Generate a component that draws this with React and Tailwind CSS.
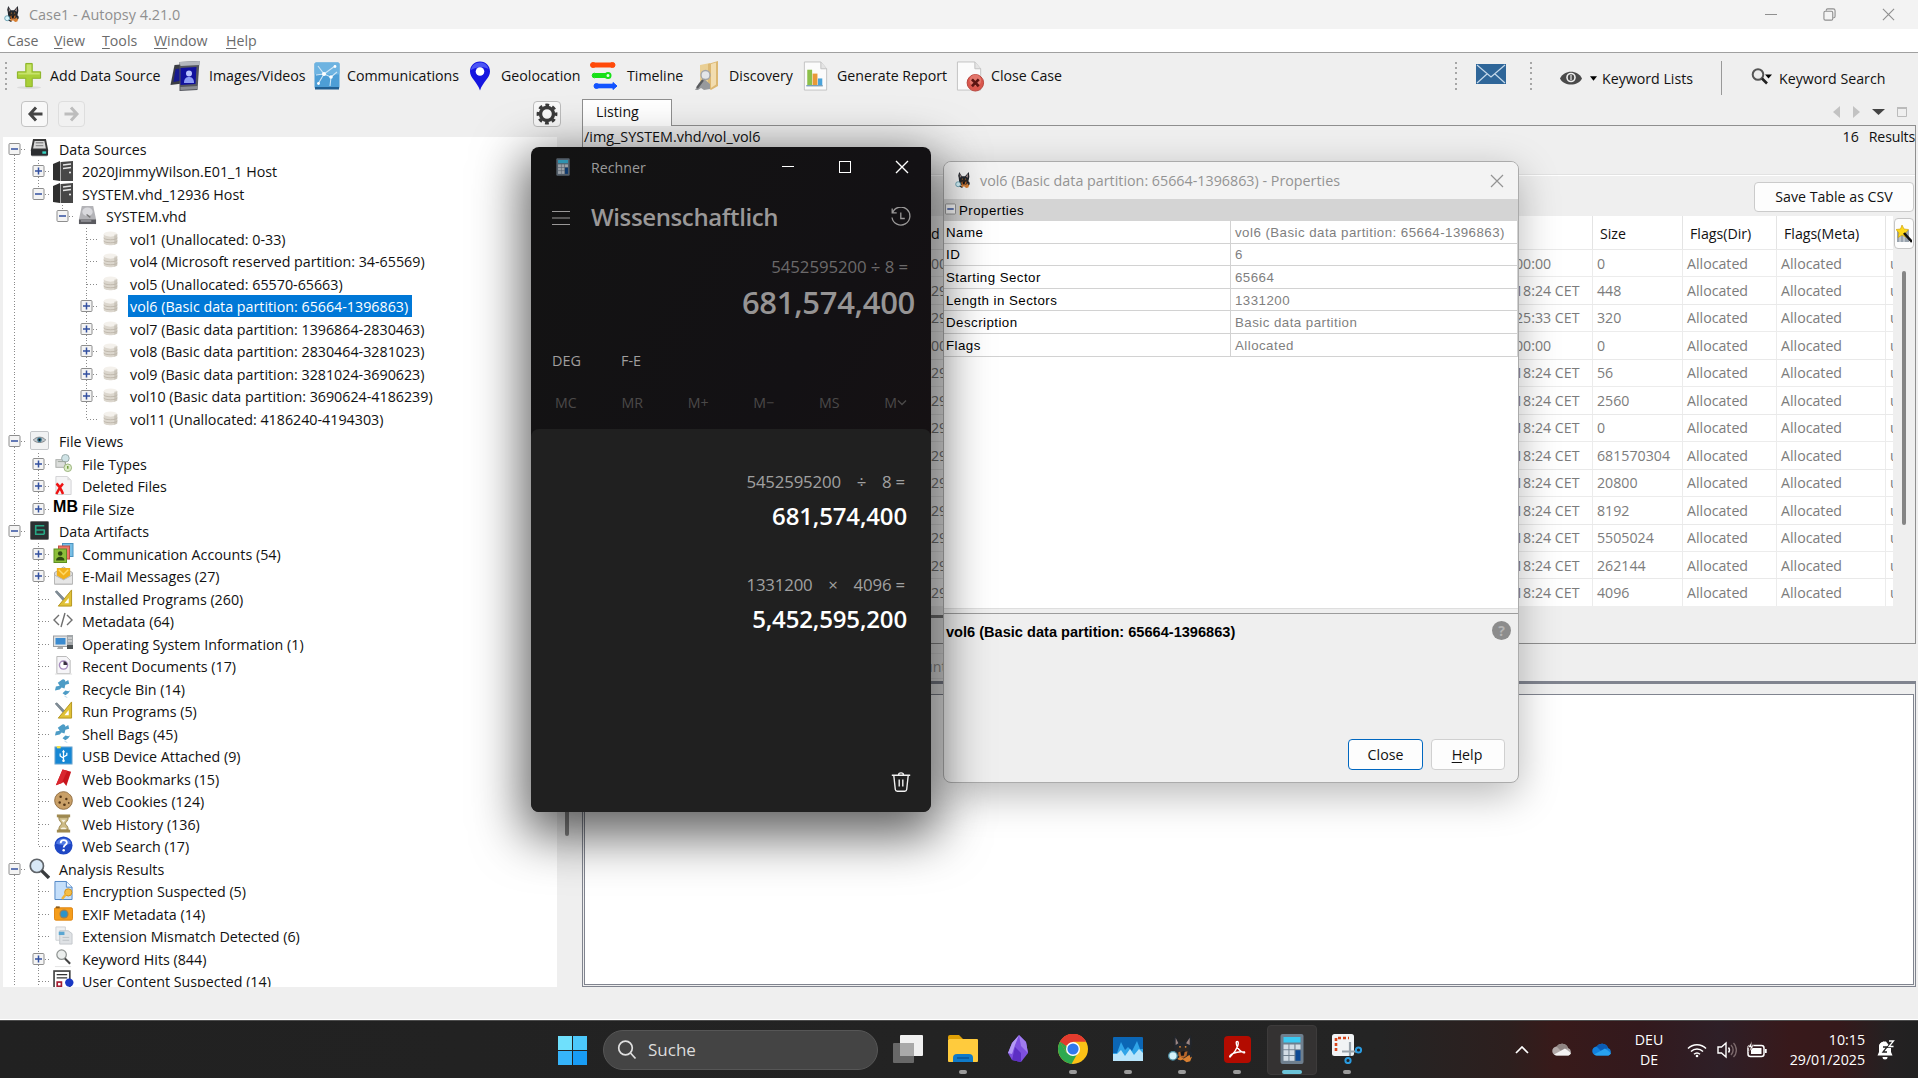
import React from "react";

/* ---------- shared icons ---------- */

function Dog({ className }) {
  return (
    <svg viewBox="0 0 32 32" className={className}>
      <path d="M8 0l5 8h6l7-8 1 9-1 5-2 8-4 3h-8l-4-5-1-9-1-4z" fill="#22262c" />
      <path d="M9 3l3 6-3 2zM24.500 3l-4 6 4 2z" fill="#9c8684" />
      <path d="M10 14l5-1h4l5 1-1 6-2 5h-8l-2-5z" fill="#2c2724" />
      <path d="M12 19l3-1 3 1 4-1-1 5-3 2h-4l-2-2z" fill="#b5652a" />
      <path d="M14 18h5l-1 5h-3z" fill="#14161a" />
      <path d="M11 26l3-2 4 2 6-4 3 2-2 5-4 1-4-3-5 2z" fill="#d98032" />
      <path d="M24 17l3 2 1 4-3 2z" fill="#22262c" />
      <circle cx="6" cy="23" r="4.700" fill="#d6f3fa" stroke="#4e8fa3" strokeWidth="1.400" />
      <path d="M9 27l5 2" stroke="#21262d" strokeWidth="2" />
      <circle cx="13.800" cy="13" r="1" fill="#e08a3a" />
      <circle cx="20" cy="13" r="1" fill="#e08a3a" />
    </svg>
  );
}

function Cross({ className, w = 1.2 }) {
  return (
    <svg viewBox="0 0 14 14" className={className} fill="none" stroke="currentColor" strokeWidth={w}>
      <path d="M1 1l12 12M13 1L1 13" />
    </svg>
  );
}

function CalcIcon({ className }) {
  return (
    <svg viewBox="0 0 24 30" className={className}>
      <rect x="0.500" y="0" width="23" height="30" rx="2" fill="#6f7f8e" />
      <rect x="3.500" y="3" width="17" height="5.500" fill="#3bc9f2" />
      {[10.500, 16.200, 22].map((y) =>
        [3.500, 9.400].map((x) => <rect key={x + "-" + y} x={x} y={y} width="5" height="4.800" fill="#d3dde6" />)
      )}
      <rect x="15.500" y="10.500" width="5" height="4.800" fill="#d3dde6" />
      <rect x="15.500" y="16.200" width="5" height="10.600" fill="#0d4a94" />
    </svg>
  );
}

/* ---------- main toolbar ---------- */

const toolIcons = {
  add: (
    <svg viewBox="0 0 28 30" className="h-[30px] w-[26px]">
      <ellipse cx="14" cy="27.500" rx="13" ry="1.500" fill="#dcdcdc" />
      <path d="M10.500 1.500h7v9h9v7h-9v9h-7v-9h-9v-7h9z" fill="#a9cf38" stroke="#86b01f" />
      <path d="M11.500 2.500h5v9h9v2h-23v-2h9z" fill="#c7e36b" />
    </svg>
  ),
  images: (
    <svg viewBox="0 0 30 30" className="h-[30px] w-[31px]">
      <path d="M4 4l12-1v19L0 24z" fill="#3b3d44" />
      <path d="M5 8l9-1v12l-11 2z" fill="#171a8f" />
      <path d="M9 1l20-1-2 29-18 1z" fill="#54565e" />
      <path d="M9 1l20-1v4l-19 1z" fill="#b4b7be" />
      <path d="M10 7l16-1-1 17-15 1z" fill="#11119e" />
      <circle cx="18.500" cy="12.500" r="3" fill="#b9c3ff" />
      <path d="M13.500 22c0-5 2.500-6 5-6s5 1 5 6z" fill="#8c9bf5" />
      <path d="M10 26l17-1v3l-17 1z" fill="#8b8d94" />
    </svg>
  ),
  comm: (
    <svg viewBox="0 0 26 28" className="h-[28px] w-[26px]">
      <rect x="0.500" y="0.500" width="25" height="26" rx="1.500" fill="#4d9ed6" />
      <rect x="0.500" y="0.500" width="25" height="12" rx="1.500" fill="#6db3e1" />
      <rect x="1" y="25" width="24" height="2.500" fill="#215f92" />
      <path d="M4 4l6 8 11-8M10 12l-6 10M10 12l7 3-1 9M17 15l6-5M10 12L2 13" stroke="#cfe6f6" strokeWidth="1.100" fill="none" />
      <g fill="#fff">
        <circle cx="10" cy="12" r="2" />
        <circle cx="17" cy="15" r="1.800" />
        <circle cx="4.500" cy="21.500" r="1.400" />
        <circle cx="21" cy="4.500" r="1.400" />
      </g>
    </svg>
  ),
  geo: (
    <svg viewBox="0 0 22 30" className="h-[30px] w-[22px]">
      <path d="M11 0.500C5 0.500 1 5 1 10.500c0 6.500 7 10 10 19 3-9 10-12.500 10-19C21 5 17 0.500 11 0.500z" fill="#1616e0" />
      <path d="M11 1.500C6 1.500 2.500 5 2 9c4-3 13-4 17.500-1C18.500 4 15.500 1.500 11 1.500z" fill="#4b55f5" />
      <circle cx="11" cy="10.500" r="4.300" fill="#fff" />
    </svg>
  ),
  timeline: (
    <svg viewBox="0 0 28 30" className="h-[30px] w-[28px]">
      <g stroke="#ff4a0a" fill="#ff4a0a">
        <path d="M4 4h18" strokeWidth="5" />
        <circle cx="3" cy="4" r="2.500" />
        <circle cx="22.500" cy="4" r="2.500" />
      </g>
      <g stroke="#17e017" fill="#17e017">
        <path d="M5 14.500h12" strokeWidth="5" />
        <circle cx="4.500" cy="14.500" r="2.300" />
        <circle cx="18" cy="14.500" r="2.500" fill="#e8ffe8" strokeWidth="2" />
      </g>
      <g stroke="#1253ff" fill="#1253ff">
        <path d="M8 25h16" strokeWidth="4.600" />
        <circle cx="6.500" cy="25" r="2.500" />
        <path d="M23 21.500l4 3.500-4 3.500z" />
      </g>
    </svg>
  ),
  discovery: (
    <svg viewBox="0 0 26 30" className="h-[30px] w-[26px]">
      <path d="M6 4l10-2v24l-10 1z" fill="#e9cf95" />
      <path d="M14 3l10-3v25l-7 4-3-2z" fill="#dcb873" />
      <path d="M17 3l5-1.500v22L17 27z" fill="#f2ddb0" />
      <circle cx="11.500" cy="14" r="4.500" fill="#e4e6e8" stroke="#a3a5a8" strokeWidth="1.300" />
      <path d="M5 22l5-4 6 5v5l-6 1-3-2-3 2H1z" fill="#97999c" />
      <path d="M9 19L3 27" stroke="#595b5e" strokeWidth="2.200" />
    </svg>
  ),
  report: (
    <svg viewBox="0 0 27 32" className="h-[31px] w-[27px]">
      <path d="M2 1h17l6 7v22H2z" fill="#fbfbfb" stroke="#c2c2c2" />
      <path d="M19 1v7h6" fill="#e4e4e4" stroke="#c2c2c2" />
      <rect x="5" y="9" width="5" height="16" fill="#8cc04a" />
      <rect x="10.500" y="13" width="5" height="12" fill="#e89a38" />
      <rect x="16" y="18" width="4.500" height="7" fill="#4aa3da" />
      <path d="M4 25.500h17" stroke="#7b9fb8" strokeWidth="1.500" />
    </svg>
  ),
  close: (
    <svg viewBox="0 0 29 32" className="h-[31px] w-[29px]">
      <path d="M1 1h18l6 7v22H1z" fill="#fbfbfb" stroke="#c2c2c2" />
      <path d="M19 1v7h6" fill="#e4e4e4" stroke="#c2c2c2" />
      <circle cx="19.500" cy="22.500" r="8.500" fill="#d9574d" stroke="#b7443c" />
      <circle cx="19.500" cy="20" r="6" fill="#e3776d" />
      <path d="M16 19l7 7M23 19l-7 7" stroke="#5c1512" strokeWidth="2.800" />
    </svg>
  ),
};

const tools = [
  ["add", "Add Data Source", "w-[32px]", "w-[122px]"],
  ["images", "Images/Videos", "w-[37px]", "w-[107px]"],
  ["comm", "Communications", "w-[31px]", "w-[124px]"],
  ["geo", "Geolocation", "w-[30px]", "w-[91px]"],
  ["timeline", "Timeline", "w-[35px]", "w-[69px]"],
  ["discovery", "Discovery", "w-[33px]", "w-[75px]"],
  ["report", "Generate Report", "w-[33px]", "w-[121px]"],
  ["close", "Close Case", "w-[33px]", "w-[90px]"],
];

function Grip() {
  return (
    <div className="flex h-7 w-[2px] flex-col justify-between">
      {[0, 1, 2, 3, 4, 5].map((i) => (
        <i key={i} className="h-[2px] w-[2px] bg-[#a6a6a6]" />
      ))}
    </div>
  );
}

function TitleBar() {
  return (
    <div className="flex h-[29px] shrink-0 items-center bg-[#f3f3f3] pl-1 text-[#8f8f8f]">
      <Dog className="h-[17px] w-[17px]" />
      <span className="ml-2 text-[14.4px]">Case1 - Autopsy 4.21.0</span>
      <div className="ml-auto flex items-center pr-[23px]">
        <span className="h-px w-3 bg-[#8f8f8f]" />
        <svg viewBox="0 0 14 14" className="ml-[46px] h-[13px] w-[13px]" fill="none" stroke="#8f8f8f" strokeWidth="1.200">
          <rect x="1" y="3.500" width="9.500" height="9.500" rx="1.500" />
          <path d="M3.500 3V2.500A1.500 1.500 0 015 1h6a2 2 0 012 2v6a1.500 1.500 0 01-1.500 1.500H11" />
        </svg>
        <Cross className="ml-[46px] h-[13px] w-[13px]" />
      </div>
    </div>
  );
}

function MenuBar() {
  const items = [
    ["", "Case", "w-[47px]"],
    ["V", "iew", "w-[48px]"],
    ["T", "ools", "w-[52px]"],
    ["W", "indow", "w-[72px]"],
    ["H", "elp", "w-[50px]"],
  ];
  return (
    <div className="flex h-6 shrink-0 items-center border-b border-[#a0a0a0] bg-white pl-[7px] text-[14.2px] text-[#6b6b6b]">
      {items.map(([u, rest, w]) => (
        <span key={rest} className={w}>
          <span className="underline underline-offset-2">{u}</span>
          {rest}
        </span>
      ))}
    </div>
  );
}

function Toolbar() {
  return (
    <div className="flex h-[46px] shrink-0 items-center pl-[5px] text-[14.2px] text-[#111]">
      <Grip />
      <div className="ml-[9px] flex items-center">
        {tools.map(([id, label, iw, tw]) => (
          <div key={id} className="flex items-center whitespace-nowrap">
            <span className={"flex " + iw}>{toolIcons[id]}</span>
            <span className={"pb-px pl-0.5 " + tw}>{label}</span>
          </div>
        ))}
      </div>
      <div className="ml-auto flex items-center">
        <Grip />
        <svg viewBox="0 0 30 20" className="mb-1 ml-[19px] h-5 w-[30px]">
          <rect width="30" height="20" fill="#2f6699" />
          <path d="M1 1l14 12L29 1M1 19l10-9M29 19l-10-9" stroke="#c4d8ea" strokeWidth="1.200" fill="none" />
        </svg>
        <div className="ml-[24px]">
          <Grip />
        </div>
        <svg viewBox="0 0 22 14" className="ml-[28px] mt-1 h-[14px] w-[22px]">
          <path d="M0 7.500C4-1.500 18-1.500 22 7.500 18 15.500 4 15.500 0 7.500z" fill="#4a4a4a" />
          <circle cx="11" cy="6.500" r="4.800" fill="#efefef" />
          <circle cx="11" cy="6.500" r="3.200" fill="#4a4a4a" />
          <path d="M11 4v5" stroke="#ddd" strokeWidth="1.300" />
        </svg>
        <svg viewBox="0 0 6 4" className="ml-2 mt-1 h-[5px] w-[7px]">
          <path d="M0 0h6L3 4z" />
        </svg>
        <span className="ml-[5px] mt-[5px] w-[119px]">Keyword Lists</span>
        <span className="mt-1 h-[34px] w-px bg-[#999]" />
        <svg viewBox="0 0 22 17" className="ml-[29px] mt-px h-[17px] w-[22px]">
          <circle cx="7" cy="6.500" r="5.300" fill="#ececec" stroke="#555" strokeWidth="2" />
          <path d="M11 10.500l5 5" stroke="#222" strokeWidth="2.600" />
          <path d="M14 6.500h7l-3.500 4z" />
        </svg>
        <span className="ml-[6px] mt-[5px] w-[139px]">Keyword Search</span>
      </div>
    </div>
  );
}

/* ---------- tree ---------- */

const Wrap = ({ children, className = "h-[19px] w-[19px]" }) => (
  <svg viewBox="0 0 20 20" className={className}>
    {children}
  </svg>
);

const treeIcons = {
  drive: (
    <Wrap>
      <path d="M4 1h12l2 10H2z" fill="#d8d8d8" stroke="#3a3a3a" strokeWidth="2" />
      <path d="M6 4h8M6 7h8" stroke="#8f8f8f" strokeWidth="1.500" />
      <rect x="1" y="11" width="18" height="6.500" rx="1" fill="#2b2d30" />
      <rect x="13" y="13" width="4" height="2.500" fill="#35d6c5" />
      <rect x="2" y="18" width="16" height="1" fill="#ddd" />
    </Wrap>
  ),
  host: (
    <Wrap className="h-[20px] w-[20px]">
      <path d="M0 3l7-3v20l-7-1z" fill="#2f2f2f" />
      <path d="M8 1l12-1v20H8z" fill="#474747" />
      <path d="M7.500 1v19" stroke="#8b8b8b" strokeWidth=".7" />
      <path d="M10 4l8-1M10 7.500l8-1" stroke="#e6e6e6" strokeWidth="1.500" />
      <circle cx="17" cy="11.500" r="1" fill="#f5f5f5" />
    </Wrap>
  ),
  disk: (
    <Wrap>
      <path d="M4 0h12l3 14H1z" fill="#b3b3b7" />
      <ellipse cx="10" cy="6" rx="5.500" ry="4.500" fill="#d9d9dd" />
      <path d="M9 9l4 3" stroke="#777" strokeWidth="1.500" />
      <rect x="1" y="14" width="18" height="5" fill="#5a5a5f" />
      <rect x="3" y="15" width="11" height="1.500" fill="#9c9ca2" />
    </Wrap>
  ),
  vol: (
    <Wrap className="mr-px h-[15px] w-[15px]">
      <path d="M1 4v12c0 4 18 4 18 0V4z" fill="#dcd7ce" />
      <ellipse cx="10" cy="4" rx="9" ry="3.500" fill="#f4f1ec" />
      <path d="M1 9c0 3.500 18 3.500 18 0M1 13c0 3.500 18 3.500 18 0" stroke="#bdb6aa" strokeWidth="1.200" fill="none" />
      <path d="M15 5v13l4-1.500V4z" fill="#bab3a7" opacity=".5" />
    </Wrap>
  ),
  views: (
    <Wrap>
      <rect x="0.500" y="0.500" width="19" height="19" rx="1.500" fill="#f1f2f3" stroke="#bfc2c5" />
      <path d="M3.500 9.500c3-4 10-4 13 0-3 3.500-10 3.500-13 0z" fill="#c3c9cd" stroke="#7e8488" />
      <circle cx="10" cy="9.300" r="2.500" fill="#33738f" />
      <circle cx="10" cy="9.300" r="1.100" fill="#111" />
    </Wrap>
  ),
  types: (
    <Wrap>
      <rect x="2" y="6" width="10" height="8" fill="#dcdedc" stroke="#a6aaa6" />
      <circle cx="12" cy="4.500" r="4" fill="#cfe3e6" stroke="#97a8a8" />
      <path d="M4 8h8v6" stroke="#9aa39a" fill="none" />
      <circle cx="14.500" cy="14.500" r="4" fill="#dcebc8" stroke="#9ab37c" />
      <path d="M14.500 12.500v3" stroke="#6b9b35" strokeWidth="1.500" />
    </Wrap>
  ),
  deleted: (
    <Wrap>
      <path d="M2 0.500h12l4 4v15H2z" fill="#f4f4f5" stroke="#d2d2d4" />
      <path d="M14 0.500v4h4" fill="#ddd" />
      <path d="M2.500 8c3 2 5 6 7 11M9.500 8c-3 3-5 7-7 11" stroke="#ee1414" strokeWidth="2.600" fill="none" />
    </Wrap>
  ),
  size: <span className="mb-[2px] mr-[-5px] font-['Liberation_Sans'] text-[16px] font-bold leading-none">MB</span>,
  artifacts: (
    <Wrap>
      <rect x="0.500" y="0.500" width="19" height="19" rx="1" fill="#2b2f31" stroke="#6c6c6c" />
      <path d="M15 5H6v9h9M6 9.500h9M15 9v5" stroke="#27a583" strokeWidth="1.700" fill="none" />
    </Wrap>
  ),
  accounts: (
    <Wrap className="h-[20px] w-[21px]">
      <rect x="9" y="0.500" width="10.500" height="13" fill="#78bfe6" stroke="#4a93c0" />
      <rect x="5" y="3" width="11" height="13" fill="#ee7668" stroke="#c04f45" />
      <rect x="0.500" y="6" width="12.500" height="13.500" fill="#8cbf3a" stroke="#5f8f22" />
      <circle cx="6.700" cy="10.500" r="2.300" fill="#2e4a12" />
      <path d="M2.500 17.500c0-5 8.500-5 8.500 0z" fill="#2e4a12" />
    </Wrap>
  ),
  mail: (
    <Wrap>
      <path d="M0.500 7L10 1l9.500 6v12H0.500z" fill="#d9dadb" stroke="#aaa" />
      <path d="M3 2h14v8l-7 5-7-5z" fill="#f0b01c" />
      <path d="M5 4l5 5 5-5" stroke="#ffd968" strokeWidth="1.500" fill="none" />
      <path d="M0.500 9.500l9.500 5 9.500-5v9.500H0.500z" fill="#e6e6e6" stroke="#b5b5b5" />
    </Wrap>
  ),
  programs: (
    <Wrap>
      <path d="M1 3l2-1.500L16 15l-2 2z" fill="#7f8b94" />
      <path d="M18.500 1v17H4.500z" fill="#e0c136" stroke="#b3931b" />
      <path d="M1 3l2-1.500L11 10l-2 2z" fill="#7f8b94" />
      <path d="M15.500 9.500v5.500H11z" fill="#fff" />
    </Wrap>
  ),
  meta: (
    <Wrap className="h-[20px] w-[20px]">
      <path d="M6 4L1 9l5 5M14 4l5 5-5 5M12 2L8 16" stroke="#6f6f6f" strokeWidth="1.400" fill="none" />
    </Wrap>
  ),
  os: (
    <Wrap className="h-[20px] w-[20px]">
      <rect x="0.500" y="3" width="14" height="10.500" fill="#e1e3e5" stroke="#9b9ea1" />
      <rect x="2.500" y="5" width="10" height="6.500" fill="#3b8bd0" />
      <path d="M5 14h5v2H4z" fill="#aaa" />
      <rect x="14" y="2" width="6" height="14" fill="#a3a7aa" />
      <path d="M15 5h4M15 8h4" stroke="#eee" />
      <rect x="14" y="12" width="6" height="4" fill="#4c5154" />
    </Wrap>
  ),
  recent: (
    <Wrap>
      <path d="M3 0.500h10l4 4v14H3z" fill="#f6f5f8" stroke="#b5b5b5" />
      <circle cx="10" cy="9.500" r="4.300" fill="#fff" stroke="#a88cc0" strokeWidth="1.500" />
      <path d="M10 9.500V5.500a4 4 0 014 4z" fill="#3a3340" />
      <path d="M1 19h18" stroke="#ddd" />
    </Wrap>
  ),
  recycle: (
    <Wrap>
      <path d="M8 1c2-1.500 4 0 4 2l3-2 1 4-4 1-1 4-3-1-2 2-5 1 1-4 4-1-2-3z" fill="#4d9cc6" />
      <path d="M12 12l3 1 2-1-2 3-3 2-3-2z" fill="#4d9cc6" />
      <path d="M11 18l3 1.500" stroke="#bcd9ea" />
    </Wrap>
  ),
  usb: (
    <Wrap>
      <rect x="1" y="1" width="18" height="18" fill="#1687d4" stroke="#75a9cf" />
      <rect x="3" y="0" width="4" height="2.500" fill="#f3e24a" />
      <path d="M10 16V6M10 13l-3.500-2.500V8M10 11.500l3.500-2V7" stroke="#fff" strokeWidth="1.300" fill="none" />
      <path d="M8.300 6.500l1.700-2.500 1.700 2.500z" fill="#fff" />
      <circle cx="10" cy="15.500" r="1.300" fill="#fff" />
    </Wrap>
  ),
  bookmark: (
    <Wrap>
      <path d="M9 0.500l9 2.500-5 15-3-4-8 3z" fill="#c8141c" />
      <path d="M9 0.500l5 1.400-6 13L2 17z" fill="#d9262e" />
    </Wrap>
  ),
  cookie: (
    <Wrap>
      <circle cx="10" cy="10" r="9.300" fill="#c9a068" stroke="#8f6c3e" />
      <path d="M13 0l3 3 4 2V0z" fill="#fff" />
      <g fill="#553719">
        <circle cx="7" cy="6" r="1.300" />
        <circle cx="13" cy="8.500" r="1.300" />
        <circle cx="6" cy="12" r="1.300" />
        <circle cx="11" cy="14.500" r="1.400" />
        <circle cx="15.500" cy="12.500" r=".9" />
      </g>
    </Wrap>
  ),
  history: (
    <Wrap>
      <rect x="3" y="0.500" width="14" height="3" fill="#a08a50" />
      <rect x="3" y="16.500" width="14" height="3" fill="#a08a50" />
      <path d="M5 3.500h10c0 4-3 5-3 6.500s3 2.500 3 6.500H5c0-4 3-5 3-6.500s-3-2.500-3-6.500z" fill="#cdbb86" stroke="#97824a" />
      <path d="M7.500 6h5L10 9zM7 16c0-2.500 6-2.500 6 0z" fill="#f7f2e2" />
    </Wrap>
  ),
  search: (
    <Wrap>
      <circle cx="10" cy="10" r="9.500" fill="#1f47c4" />
      <path d="M2 8a8.500 8 0 0116 0c-4 2-12 2-16 0z" fill="#4f79e4" />
      <path d="M7 7.500c0-4 6.500-4 6.500-.5 0 2.200-3.300 2.200-3.300 5" stroke="#fff" strokeWidth="1.900" fill="none" />
      <circle cx="10.200" cy="15" r="1.300" fill="#fff" />
    </Wrap>
  ),
  lens: (
    <Wrap className="h-[21px] w-[21px]">
      <circle cx="7.500" cy="7.500" r="6.300" fill="#d8e8f6" stroke="#5f6469" strokeWidth="1.600" />
      <path d="M12 12l7 7" stroke="#383b3e" strokeWidth="3.200" />
    </Wrap>
  ),
  encrypt: (
    <Wrap className="h-[21px] w-[19px]">
      <path d="M1 0.500h12l6 6v13H1z" fill="#c5dffa" stroke="#4d84c4" />
      <path d="M13 0.500v6h6" fill="#eef6ff" stroke="#4d84c4" />
      <circle cx="15" cy="12" r="3.800" fill="#f4bd45" stroke="#cf8f1f" />
      <path d="M12.500 14L8.500 19" stroke="#f0b43a" strokeWidth="2.600" />
    </Wrap>
  ),
  exif: (
    <Wrap>
      <rect x="0.500" y="4" width="19" height="13" rx="1.500" fill="#f59d1b" stroke="#dd8410" />
      <rect x="2" y="2.500" width="4" height="2" fill="#8a5a1a" />
      <circle cx="10.500" cy="10.500" r="4.800" fill="#9b8056" />
      <circle cx="10.500" cy="10.500" r="3.500" fill="#2c93c8" />
    </Wrap>
  ),
  mismatch: (
    <Wrap>
      <path d="M2 1h10v14H2z" fill="#eef0f2" stroke="#cfd2d5" />
      <path d="M6 5h9l4 3v11H6z" fill="#dfe2e5" stroke="#c2c6ca" />
      <rect x="5" y="6" width="6" height="3.500" fill="#5aa6d2" />
      <path d="M9 12h7M9 15h7" stroke="#bcc1c5" />
    </Wrap>
  ),
  keyword: (
    <Wrap>
      <circle cx="8" cy="6" r="5" fill="#ebeeed" stroke="#8f9492" strokeWidth="1.300" />
      <path d="M11.500 10l5.500 5.500" stroke="#444" strokeWidth="2.200" />
      <path d="M1 18.500h17" stroke="#e4e4e4" />
    </Wrap>
  ),
  user: (
    <Wrap className="h-[21px] w-[21px]">
      <rect x="1" y="1" width="15" height="18" fill="#fff" stroke="#444" strokeWidth="1.600" />
      <path d="M3.500 4.500h10M3.500 7.500h10" stroke="#333" strokeWidth="1.200" />
      <rect x="4" y="11.500" width="4" height="4" fill="#fff" stroke="#a51c30" strokeWidth="1.600" />
      <circle cx="15.500" cy="12" r="4" fill="#1938c4" />
      <path d="M10 20c0-5 10-5 10 0z" fill="#1938c4" />
    </Wrap>
  ),
};

/* level, expander (+, -, none), icon, label, lines per level: t = top half, b = bottom half */
const rows = [
  [0, "-", "drive", "Data Sources", ["b"]],
  [1, "+", "host", "2020JimmyWilson.E01_1 Host", ["tb", "tb"]],
  [1, "-", "host", "SYSTEM.vhd_12936 Host", ["tb", "t"]],
  [2, "-", "disk", "SYSTEM.vhd", ["tb", "", "t"]],
  [3, "", "vol", "vol1 (Unallocated: 0-33)", ["tb", "", "", "tb"]],
  [3, "", "vol", "vol4 (Microsoft reserved partition: 34-65569)", ["tb", "", "", "tb"]],
  [3, "", "vol", "vol5 (Unallocated: 65570-65663)", ["tb", "", "", "tb"]],
  [3, "+", "vol", "vol6 (Basic data partition: 65664-1396863)", ["tb", "", "", "tb"], true],
  [3, "+", "vol", "vol7 (Basic data partition: 1396864-2830463)", ["tb", "", "", "tb"]],
  [3, "+", "vol", "vol8 (Basic data partition: 2830464-3281023)", ["tb", "", "", "tb"]],
  [3, "+", "vol", "vol9 (Basic data partition: 3281024-3690623)", ["tb", "", "", "tb"]],
  [3, "+", "vol", "vol10 (Basic data partition: 3690624-4186239)", ["tb", "", "", "tb"]],
  [3, "", "vol", "vol11 (Unallocated: 4186240-4194303)", ["tb", "", "", "t"]],
  [0, "-", "views", "File Views", ["tb"]],
  [1, "+", "types", "File Types", ["tb", "tb"]],
  [1, "+", "deleted", "Deleted Files", ["tb", "tb"]],
  [1, "+", "size", "File Size", ["tb", "t"]],
  [0, "-", "artifacts", "Data Artifacts", ["tb"]],
  [1, "+", "accounts", "Communication Accounts (54)", ["tb", "tb"]],
  [1, "+", "mail", "E-Mail Messages (27)", ["tb", "tb"]],
  [1, "", "programs", "Installed Programs (260)", ["tb", "tb"]],
  [1, "", "meta", "Metadata (64)", ["tb", "tb"]],
  [1, "", "os", "Operating System Information (1)", ["tb", "tb"]],
  [1, "", "recent", "Recent Documents (17)", ["tb", "tb"]],
  [1, "", "recycle", "Recycle Bin (14)", ["tb", "tb"]],
  [1, "", "programs", "Run Programs (5)", ["tb", "tb"]],
  [1, "", "recycle", "Shell Bags (45)", ["tb", "tb"]],
  [1, "", "usb", "USB Device Attached (9)", ["tb", "tb"]],
  [1, "", "bookmark", "Web Bookmarks (15)", ["tb", "tb"]],
  [1, "", "cookie", "Web Cookies (124)", ["tb", "tb"]],
  [1, "", "history", "Web History (136)", ["tb", "tb"]],
  [1, "", "search", "Web Search (17)", ["tb", "t"]],
  [0, "-", "lens", "Analysis Results", ["tb"]],
  [1, "", "encrypt", "Encryption Suspected (5)", ["tb", "tb"]],
  [1, "", "exif", "EXIF Metadata (14)", ["tb", "tb"]],
  [1, "", "mismatch", "Extension Mismatch Detected (6)", ["tb", "tb"]],
  [1, "+", "keyword", "Keyword Hits (844)", ["tb", "tb"]],
  [1, "", "user", "User Content Suspected (14)", ["tb", "tb"]],
];

function Guide({ lines, last, box }) {
  return (
    <svg viewBox="0 0 24 22.500" className="h-[22.5px] w-6 shrink-0">
      <g stroke="#8a8a8a" strokeDasharray="1 2" fill="none">
        {lines.includes("t") && <path d="M12.500 0v11" />}
        {lines.includes("b") && <path d="M12.500 11v11.500" />}
        {last && <path d="M13 11.500h11" />}
      </g>
      {box && (
        <g>
          <rect x="7" y="5.500" width="11" height="11" rx="1" fill="#f4f4f4" stroke="#8e8e8e" />
          <path d={box === "+" ? "M9 11h7M12.500 7.500v7" : "M9 11h7"} stroke="#3350a0" strokeWidth="1.500" />
        </g>
      )}
    </svg>
  );
}

function Tree() {
  return (
    <div className="ml-[3px] h-[850px] w-[554px] shrink-0 overflow-hidden bg-white pt-[0.5px]">
      {rows.map(([level, box, icon, label, lines, selected]) => (
        <div key={label} className="-ml-px flex h-[22.5px] items-center whitespace-nowrap">
          {lines.map((l, i) => (
            <Guide key={i} lines={l} last={i === level} box={i === level ? box : ""} />
          ))}
          <span className="-mt-px flex w-[26px] shrink-0 items-center justify-center">{treeIcons[icon]}</span>
          <span
            className={
              "flex h-[22px] items-center pl-0.5 pr-1 pt-px text-[14.27px] " +
              (level === 0 ? "ml-[5px] " : "ml-1 ") +
              (selected ? "bg-[#0078d7] text-white" : "text-[#111]")
            }
          >
            {label}
          </span>
        </div>
      ))}
    </div>
  );
}

function Sidebar() {
  return (
    <div className="flex w-[582px] shrink-0 flex-col">
      <div className="flex h-[38px] items-start pl-[21px] pt-[2px]">
        <span className="flex h-[26px] w-[27px] items-center justify-center rounded-sm border border-[#c3c3c3] bg-[#f8f8f8]">
          <svg viewBox="0 0 16 16" className="h-4 w-4" fill="none" stroke="#444" strokeWidth="3">
            <path d="M9 1.500L3 8l6 6.500M3.500 8h12" />
          </svg>
        </span>
        <span className="ml-[10px] flex h-[26px] w-[27px] items-center justify-center rounded-sm border border-[#dedede] bg-[#f1f1f1]">
          <svg viewBox="0 0 16 16" className="h-4 w-4" fill="none" stroke="#bdbdbd" strokeWidth="3">
            <path d="M7 1.500L13 8l-6 6.500M12.500 8H0.500" />
          </svg>
        </span>
        <span className="ml-[448px] flex h-[26px] w-[28px] items-center justify-center rounded-sm border border-[#bcbcbc] bg-[#f8f8f8]">
          <svg viewBox="0 0 22 22" className="h-[22px] w-[22px]" fill="none" stroke="#3b3b3b">
            <circle cx="11" cy="11" r="6.500" strokeWidth="3.400" />
            <circle cx="11" cy="11" r="9" strokeWidth="2.800" strokeDasharray="3.800 3.270" strokeDashoffset="1.900" />
          </svg>
        </span>
      </div>
      <div className="flex">
        <Tree />
        <div className="flex h-[850px] flex-col pl-2 pt-[30px]">
          <span className="h-[669px] w-1 rounded bg-[#858585]" />
        </div>
      </div>
    </div>
  );
}

/* ---------- result table ---------- */

const records = [
  ["00", "00:00", "0"],
  ["29", "18:24 CET", "448"],
  ["29", "25:33 CET", "320"],
  ["00", "00:00", "0"],
  ["29", "18:24 CET", "56"],
  ["29", "18:24 CET", "2560"],
  ["29", "18:24 CET", "0"],
  ["29", "18:24 CET", "681570304"],
  ["29", "18:24 CET", "20800"],
  ["29", "18:24 CET", "8192"],
  ["29", "18:24 CET", "5505024"],
  ["29", "18:24 CET", "262144"],
  ["29", "18:24 CET", "4096"],
];

function ResultTable() {
  return (
    <div className="w-[1310px] overflow-hidden whitespace-nowrap bg-white text-[14.2px]">
      <div className="flex h-[33px] items-center text-[#111]">
        <span className="ml-[348px] w-[661px] pt-0.5">d T</span>
        <span className="flex h-full w-[90px] items-center border-l border-[#e4e4e4] pl-[7px] pt-[3px]">Size</span>
        <span className="flex h-full w-[94px] items-center border-l border-[#e4e4e4] pl-[7px] pt-[3px]">Flags(Dir)</span>
        <span className="flex h-full w-[109px] items-center border-l border-[#e4e4e4] pl-[7px] pt-[3px]">Flags(Meta)</span>
        <span className="h-full w-2 border-l border-[#e4e4e4]" />
      </div>
      {records.map(([day, time, size], i) => (
        <div
          key={i}
          className={
            "flex h-[27.46px] items-center border-t text-[#7c7c7c] " +
            (i % 2 ? "border-[#ececec]" : "border-[#e9e9e9]")
          }
        >
          <span className="ml-[348px] w-[584px]">{day}</span>
          <span className="w-[77px]">{time}</span>
          <span className="flex h-full w-[90px] items-center border-l border-[#ececec] pl-1">{size}</span>
          <span className="flex h-full w-[94px] items-center border-l border-[#ececec] pl-1">Allocated</span>
          <span className="flex h-full w-[109px] items-center border-l border-[#ececec] pl-1">Allocated</span>
          <span className="flex h-full w-2 items-center overflow-hidden border-l border-[#ececec] pl-1">u</span>
        </div>
      ))}
    </div>
  );
}

function ContentPane() {
  return (
    <div className="flex w-[1334px] shrink-0 flex-col">
      <div className="flex h-[27px]">
        <span className="flex w-[90px] items-center border-x border-t border-[#8f8f8f] bg-white pb-0.5 pl-[13px] text-[14.2px] text-[#111]">
          Listing
        </span>
        <div className="flex flex-1 items-center border-b border-[#8f8f8f] pb-1">
          <svg viewBox="0 0 76 14" className="mb-[-4px] ml-auto mr-[8px] h-[14px] w-[76px]">
            <path d="M8 1v12L1 7z" fill="#c2c2c2" />
            <path d="M21 1v12l7-6z" fill="#c2c2c2" />
            <path d="M40 4h13l-6.500 6z" fill="#444" />
            <path d="M65.500 3v8.500h9V3z" fill="#efefef" stroke="#bbb" />
            <path d="M65 3h10" stroke="#bbb" strokeWidth="2" />
          </svg>
        </div>
      </div>
      <div className="h-[518px] border-x border-b border-[#8f8f8f]">
        <div className="flex h-[49px] justify-between border-b border-[#e2e2e2] pl-px text-[14.4px] text-[#111]">
          <span>/img_SYSTEM.vhd/vol_vol6</span>
          <span className="flex gap-[10px] text-[14.2px]">
            <span>16</span>
            <span className="tracking-[-0.2px]">Results</span>
          </span>
        </div>
        <div className="flex justify-end border-t border-white pr-px pt-[6px]">
          <span className="flex h-[30px] w-[160px] items-center justify-center rounded border border-[#cbcbcb] bg-[#fdfdfd] text-[14.2px] text-[#111]">
            Save Table as CSV
          </span>
        </div>
        <div className="mt-1 flex">
          <ResultTable />
          <div className="flex flex-col items-center">
            <span className="ml-px mt-0.5 flex h-[31px] w-5 items-center justify-center rounded border border-[#c6c6c6] bg-[#fdfdfd]">
              <svg viewBox="0 0 16 18" className="h-[18px] w-4">
                <path d="M1 5h12v12H1z" fill="#9aa4ae" />
                <path d="M4 5v12M8 5v12" stroke="#dfe3e6" />
                <path d="M6 0l2 4 4.500.5L9.500 8l1 4.500L6 10l-4 2.500L3 8 0 4.500 4.500 4z" fill="#ffd91a" stroke="#c79a00" strokeWidth=".6" />
                <path d="M8 8l8 9" stroke="#111" strokeWidth="2.600" />
              </svg>
            </span>
            <span className="mt-[22px] h-[254px] w-1 rounded bg-[#858585]" />
          </div>
        </div>
        <span className="ml-[2px] mt-[9px] block h-[3px] w-[600px] bg-[#777]" />
      </div>
      <div className="flex h-[37px] flex-col pt-[9px]">
        <div className="h-[26px] w-[400px] border-b border-t border-[#e0e0e0] pl-[342px] pt-0.5 text-[14.2px] text-[#9a9a9a]">
          <span>unt</span>
        </div>
      </div>
      <div className="flex h-[306px] flex-col border border-t-[3px] border-[#80848f] px-px pb-px pt-[10px]">
        <div className="flex-1 border border-[#80848f] bg-white" />
      </div>
    </div>
  );
}

/* ---------- floating windows ---------- */

function PropertiesDialog() {
  const props = [
    ["Name", "vol6 (Basic data partition: 65664-1396863)"],
    ["ID", "6"],
    ["Starting Sector", "65664"],
    ["Length in Sectors", "1331200"],
    ["Description", "Basic data partition"],
    ["Flags", "Allocated"],
  ];
  return (
    <div className="absolute left-[943px] top-[161px] flex h-[622px] w-[576px] flex-col overflow-hidden rounded-lg border border-[#ababab] bg-[#efefef] shadow-[0_12px_40px_rgba(0,0,0,0.28)]">
      <div className="flex h-[37px] shrink-0 items-center bg-[#f3f3f3] pl-[11px] pr-[14px] text-[#939393]">
        <Dog className="h-[17px] w-[17px]" />
        <span className="ml-2 text-[14.3px]">vol6 (Basic data partition: 65664-1396863) - Properties</span>
        <Cross className="ml-auto h-[14px] w-[14px]" />
      </div>
      <div className="h-[410px] shrink-0 border-b border-[#dedede] bg-white font-['Liberation_Sans'] text-[13.3px] tracking-[0.46px]">
        <div className="flex h-[22px] items-center bg-[#d4d4d4] text-black">
          <svg viewBox="0 0 12 12" className="-mt-0.5 ml-px h-3 w-[11px]">
            <rect x="0.500" y="0.500" width="11" height="11" rx="1" fill="#f6f6f6" stroke="#8e8e8e" />
            <path d="M2.500 6h7" stroke="#3350a0" strokeWidth="1.500" />
          </svg>
          <span className="ml-[3px] pt-px">Properties</span>
        </div>
        {props.map(([k, v]) => (
          <div key={k} className="flex h-[22.6px] items-center border-b border-r border-[#d2d2d2]">
            <span className="flex h-full w-[287px] items-center border-r border-[#d2d2d2] pl-[2px] pt-0.5 text-black">{k}</span>
            <span className="pl-[4px] pt-0.5 text-[#7f7f7f]">{v}</span>
          </div>
        ))}
      </div>
      <div className="mt-1 flex h-[126px] shrink-0 items-start justify-between border-t border-[#9c9c9c] pl-[2px] pr-[7px] pt-[7px]">
        <span className="mt-px font-['Liberation_Sans'] text-[14.58px] font-bold text-black">
          vol6 (Basic data partition: 65664-1396863)
        </span>
        <span className="flex h-[19px] w-[19px] items-center justify-center rounded-full bg-[#8c8c8c] text-[14px] font-bold leading-none text-[#b4b4b4]">
          ?
        </span>
      </div>
      <div className="flex justify-end gap-2 pr-[13px] text-[14.2px] text-[#111]">
        <span className="flex h-[31px] w-[75px] items-center justify-center rounded border border-[#0067c0] bg-[#fdfdfd]">Close</span>
        <span className="flex h-[31px] w-[74px] items-center justify-center rounded border border-[#d0d0d0] bg-[#fdfdfd] pr-0.5">
          <span className="underline underline-offset-2">H</span>elp
        </span>
      </div>
    </div>
  );
}

function HistoryEntry({ a, op, b, result }) {
  return (
    <div className="flex flex-col items-end">
      <div className="flex h-6 items-center whitespace-nowrap pr-[2px] text-[16.8px] tracking-[-0.15px] text-[#a0a0a0]">
        <span>{a}</span>
        <span className="w-[41px] text-center">{op}</span>
        <span>{b} =</span>
      </div>
      <div className="mt-[5px] flex h-[34px] items-center text-[24px] font-semibold tracking-[-0.15px] text-white">{result}</div>
    </div>
  );
}

function Calculator() {
  return (
    <div className="absolute left-[531px] top-[147px] flex h-[665px] w-[400px] flex-col overflow-hidden rounded-lg bg-gradient-to-br from-[#131313] via-[#131114] to-[#181112] shadow-[0_16px_50px_8px_rgba(0,0,0,0.62)]">
      <div className="flex h-10 shrink-0 items-center pl-[25px] text-[#9a9a9a]">
        <CalcIcon className="h-[18px] w-[14px] opacity-70" />
        <span className="ml-[21px] pt-px text-[14.2px]">Rechner</span>
        <div className="ml-auto flex items-center pb-px pr-[22px] text-white">
          <span className="h-px w-3 bg-white" />
          <span className="ml-[45px] h-3 w-3 border border-white" />
          <Cross className="ml-[44px] h-[14px] w-[14px]" w={1.4} />
        </div>
      </div>
      <div className="mt-[9px] flex h-[42px] shrink-0 items-center pl-[21px] pr-[20px] text-[#9a9898]">
        <svg viewBox="0 0 18 14" className="mt-px h-[14px] w-[18px]" stroke="currentColor">
          <path d="M0 .5h18M0 7h18M0 13.500h18" />
        </svg>
        <span className="ml-[21px] text-[24px] font-semibold tracking-[-0.38px]">Wissenschaftlich</span>
        <svg viewBox="0 0 20 20" className="ml-auto h-5 w-5" fill="none" stroke="currentColor" strokeWidth="1.300">
          <path d="M1.200 1.500v4.300h4.500M1.500 5.800A9 9 0 111 10.500M9.800 5.500v6h4" />
        </svg>
      </div>
      <div className="mt-[17px] flex h-6 shrink-0 items-center justify-end pr-[23px] text-[16.8px] text-[#6b696a]">
        <span className="tracking-[-0.07px]">5452595200 ÷ 8 =</span>
      </div>
      <div className="mt-px flex h-11 shrink-0 items-center justify-end pr-[16px] text-[31px] font-semibold tracking-[-0.3px] text-[#969494]">
        681,574,400
      </div>
      <div className="mt-[25px] flex h-6 shrink-0 items-center pl-[21px] text-[14.4px] text-[#a09e9e]">
        <span className="w-[69px]">DEG</span>
        <span>F-E</span>
      </div>
      <div className="mt-[18px] flex h-6 shrink-0 items-center justify-between pl-[24px] pr-[24px] text-[14.2px] text-[#4b4949]">
        <span>MC</span>
        <span>MR</span>
        <span>M+</span>
        <span>M−</span>
        <span>MS</span>
        <span className="flex items-center">
          M
          <svg viewBox="0 0 10 6" className="h-[6px] w-[10px]" fill="none" stroke="currentColor" strokeWidth="1.400">
            <path d="M1 .5l4 4 4-4" />
          </svg>
        </span>
      </div>
      <div className="mt-auto flex h-[383px] shrink-0 flex-col rounded-t-lg bg-[#202020] pr-6 pt-[41px]">
        <HistoryEntry a="5452595200" op="÷" b="8" result="681,574,400" />
        <div className="h-10" />
        <HistoryEntry a="1331200" op="×" b="4096" result="5,452,595,200" />
        <svg viewBox="0 0 20 20" className="mb-5 ml-auto mr-[-4px] mt-auto h-5 w-5" fill="none" stroke="#f2f2f2" strokeWidth="1.400">
          <path d="M.8 3.200h18.400M2.800 3.500l1.500 14a2 2 0 002 1.700h7.400a2 2 0 002-1.700l1.500-14M7.500 3c0-2.800 5-2.800 5 0M8.200 7.500v7M11.800 7.500v7" />
        </svg>
      </div>
    </div>
  );
}

/* ---------- task bar ---------- */

const apps = [
  [
    "view", "",
    <svg viewBox="0 0 30 28" className="h-7 w-[30px]">
      <rect x="0" y="8" width="21" height="20" rx="1" fill="#686868" />
      <rect x="7" y="0" width="23" height="21" rx="1" fill="#f0f0f0" />
      <rect x="7" y="8" width="14" height="13" fill="#a9a9a9" />
    </svg>,
  ],
  [
    "files", "dot",
    <svg viewBox="0 0 30 28" className="h-7 w-[30px]">
      <path d="M0 2a2 2 0 012-2h9l4 4H0z" fill="#e0a106" />
      <rect x="0" y="4" width="30" height="23" rx="1" fill="#ffcb3d" />
      <path d="M5 27v-4a4 4 0 014-4h12a4 4 0 014 4v4z" fill="#0f7ac9" />
      <path d="M9 23h12" stroke="#0a5596" strokeWidth="1.500" />
    </svg>,
  ],
  [
    "obsidian", "",
    <svg viewBox="0 0 22 28" className="h-7 w-[22px]">
      <path d="M12 0l7 7 2 11-7 9-9-2-4-7 4-10z" fill="#7e50e0" />
      <path d="M12 0L8 10l-3 9-4-1 4-10z" fill="#b49af5" />
      <path d="M12 0l2 11 7 7-2-11z" fill="#a07cf0" />
      <path d="M8 12l6 6 0 9-9-2z" fill="#5d2fc4" />
    </svg>,
  ],
  [
    "chrome", "dot",
    <svg viewBox="0 0 30 30" className="h-[30px] w-[30px]">
      <circle cx="15" cy="15" r="15" fill="#fbc116" />
      <path d="M15 15L2 7.500A15 15 0 0128 7.500H15z" fill="#e33b2e" />
      <path d="M2 7.500a15 15 0 0011.500 22.400L20 18.500 15 15 8.500 18.700z" fill="#2da94f" />
      <path d="M2 7.500A15 15 0 0128 7.500H15a7 7 0 00-6.500 11z" fill="#e33b2e" />
      <path d="M2 7.500l6.500 11 3-4z" fill="#2da94f" />
      <circle cx="15" cy="15" r="7" fill="#fff" />
      <circle cx="15" cy="15" r="5.600" fill="#3079ed" />
    </svg>,
  ],
  [
    "monitor", "dot",
    <svg viewBox="0 0 30 24" className="h-6 w-[30px]">
      <rect width="30" height="24" rx="1" fill="#0b66b5" />
      <path d="M0 16h4l4-11 4 8 3-3 4 4 5-10 3 8h3v12H0z" fill="#2fa4e8" />
      <path d="M0 17h4l4-4 4 6 5-7 4 6 5-6 4 4v8H0z" fill="#b9e5fb" />
    </svg>,
  ],
  ["autopsy", "dot", <Dog className="h-[29px] w-[30px]" />],
  [
    "pdf", "dot",
    <svg viewBox="0 0 27 27" className="h-[27px] w-[27px]">
      <rect width="27" height="27" rx="4" fill="#b30b00" />
      <path d="M13.200 5.500c2.500 0 .8 8-7.200 15.500-2-1.500 6-6.500 14.500-5 1.500 2.500-8-1-8.300-9.500 0-.7.500-1 1-1z" fill="none" stroke="#fff" strokeWidth="1.400" />
    </svg>,
  ],
  ["calc", "active", <CalcIcon className="h-[30px] w-6" />],
  [
    "snip", "dot",
    <svg viewBox="0 0 30 30" className="h-[30px] w-[30px]">
      <rect x="0" y="0" width="22" height="22" rx="2.500" fill="#f1f3f5" />
      <path d="M4 17V4h13" stroke="#d8441a" strokeWidth="2.600" strokeDasharray="3 2" fill="none" />
      <path d="M18 8v14M10 17.500h15" stroke="#9aa3ab" strokeWidth="2.200" />
      <circle cx="26.500" cy="16" r="2.600" fill="none" stroke="#2a9be0" strokeWidth="2" />
      <circle cx="16" cy="26.500" r="2.600" fill="none" stroke="#2a9be0" strokeWidth="2" />
    </svg>,
  ],
];

function Taskbar() {
  return (
    <div className="flex h-[58px] shrink-0 items-center border-t border-[#4d4d4d] bg-[linear-gradient(90deg,#212121_0px,#242424_1380px,#2d1f1e_1510px,#381a1a_1555px,#33191d_1640px,#2e1f27_1720px,#38191b_1790px,#35191b_1840px,#242122_1890px,#212121_1918px)] pl-[558px]">
      <svg viewBox="0 0 29 29" className="mt-0.5 h-[29px] w-[29px]" fill="#3cb9f8">
        <path d="M0 0h14v14H0z" fill="#6fe0fc" />
        <path d="M15 0h14v14H15z" fill="#4cc8fb" />
        <path d="M0 15h14v14H0z" fill="#36b4fa" />
        <path d="M15 15h14v14H15z" fill="#189cf5" />
      </svg>
      <div className="ml-4 mt-px flex h-10 w-[275px] items-center rounded-full border border-[#565656] bg-[#444] pl-[13px] text-[17px] text-[#dcdcdc]">
        <svg viewBox="0 0 20 20" className="h-5 w-5" fill="none" stroke="#e0e0e0" strokeWidth="1.700">
          <circle cx="8.500" cy="8" r="6.800" />
          <path d="M13.500 13l5 5.500" />
        </svg>
        <span className="ml-[11px]">Suche</span>
      </div>
      <div className="ml-[3px] flex h-full items-center">
        {apps.map(([id, state, icon]) => (
          <div
            key={id}
            className={
              "mx-[2.4px] flex h-[50px] w-[50px] flex-col items-center rounded " +
              (state === "active" ? "border border-[#3d3b3b] bg-[#343232]" : "border border-transparent")
            }
          >
            <span className="flex h-[44px] items-center justify-center pt-[3px]">{icon}</span>
            {state === "dot" && <span className="h-1 w-2 rounded-full bg-[#9b9b9b]" />}
            {state === "active" && <span className="h-1 w-5 rounded-full bg-[#6cc3d8]" />}
          </div>
        ))}
      </div>
      <div className="ml-auto flex items-center text-[14.2px] leading-5 text-white">
        <svg viewBox="0 0 14 8" className="h-2 w-[14px]" fill="none" stroke="#fff" strokeWidth="1.700">
          <path d="M1 7l6-6 6 6" />
        </svg>
        <svg viewBox="0 0 20 13" className="ml-[23px] h-[13px] w-5">
          <path d="M5 12.500a4.500 4.500 0 01-.5-9A6.500 6.500 0 0116 5a4 4 0 01.5 7.500z" fill="#b3aaa9" />
          <path d="M4.500 3.500A6.500 6.500 0 0116 5L9 8z" fill="#8f8583" />
          <path d="M2 11.500L13 5.500l6 4.500a3.500 3.500 0 01-2.500 2.500H5a4 4 0 01-3-1z" fill="#f4f2f2" />
        </svg>
        <svg viewBox="0 0 20 13" className="ml-5 h-[13px] w-5">
          <path d="M5 12.500a4.500 4.500 0 01-.5-9A6.500 6.500 0 0116 5a4 4 0 01.5 7.500z" fill="#1180dd" />
          <path d="M4.500 3.500A6.500 6.500 0 0116 5L9 8z" fill="#0a5cb5" />
          <path d="M2 11.500L13 5.500l6 4.500a3.500 3.500 0 01-2.500 2.500H5a4 4 0 01-3-1z" fill="#28a1ee" />
        </svg>
        <div className="ml-[22px] w-[30px] text-center">
          <div>DEU</div>
          <div>DE</div>
        </div>
        <svg viewBox="0 0 20 16" className="ml-[23px] h-4 w-5" fill="none" stroke="#fff" strokeWidth="1.500">
          <path d="M1 6.500a12.500 12.500 0 0118 0M4 9.500a8.500 8.500 0 0112 0M7 12.300a4.500 4.500 0 016 0" />
          <circle cx="10" cy="14" r="1.300" fill="#fff" stroke="none" />
        </svg>
        <svg viewBox="0 0 20 18" className="ml-[10px] h-[18px] w-5" fill="none" stroke="#fff" strokeWidth="1.400">
          <path d="M1 6h3.500L9 2v14l-4.500-4H1z" />
          <path d="M11.500 6.500a4 4 0 010 5" />
          <path d="M14 4a7 7 0 010 10M16.500 2a10 10 0 010 14" stroke="#7c6a6c" />
        </svg>
        <svg viewBox="0 0 20 17" className="ml-[10px] h-[17px] w-5">
          <rect x="1" y="4.500" width="16" height="11" rx="2.500" fill="none" stroke="#fff" strokeWidth="1.500" />
          <rect x="4" y="7" width="10.500" height="6" fill="#fff" />
          <path d="M18 8h1.700v4H18z" fill="#fff" />
          <path d="M5 0L1 6.500h2.500L2 11l5-6H4.500z" fill="#fff" stroke="#38191b" strokeWidth=".6" />
        </svg>
        <div className="ml-[18px] w-20 text-right">
          <div>10:15</div>
          <div>29/01/2025</div>
        </div>
        <svg viewBox="0 0 18 20" className="ml-3 mr-[23px] h-5 w-[18px]">
          <path d="M8 1.500C4 1.500 2 4 2 7.500V12L0.500 15.500h15L14 12V8H7V1.500z" fill="#fff" />
          <path d="M2 7c0-4 3-5.500 7-5.500L14 8v5H2z" fill="#fff" />
          <path d="M5.500 17h5a2.500 2.500 0 01-5 0z" fill="#fff" />
          <path d="M6 7h4l-4 5h4" stroke="#222" strokeWidth="1.300" fill="none" />
          <path d="M12 1h4.500L12 6.500h4.500" stroke="#222" strokeWidth="3" fill="none" />
          <path d="M12 1h4.500L12 6.500h4.500" stroke="#fff" strokeWidth="1.300" fill="none" />
        </svg>
      </div>
    </div>
  );
}

export default function App() {
  return (
    <div className="relative flex h-[1078px] w-[1918px] flex-col overflow-hidden bg-[#efefef] font-['Open_Sans',sans-serif]">
      <TitleBar />
      <MenuBar />
      <Toolbar />
      <div className="flex h-[921px] shrink-0 border-b border-white">
        <Sidebar />
        <ContentPane />
      </div>
      <Taskbar />
      <PropertiesDialog />
      <Calculator />
    </div>
  );
}
